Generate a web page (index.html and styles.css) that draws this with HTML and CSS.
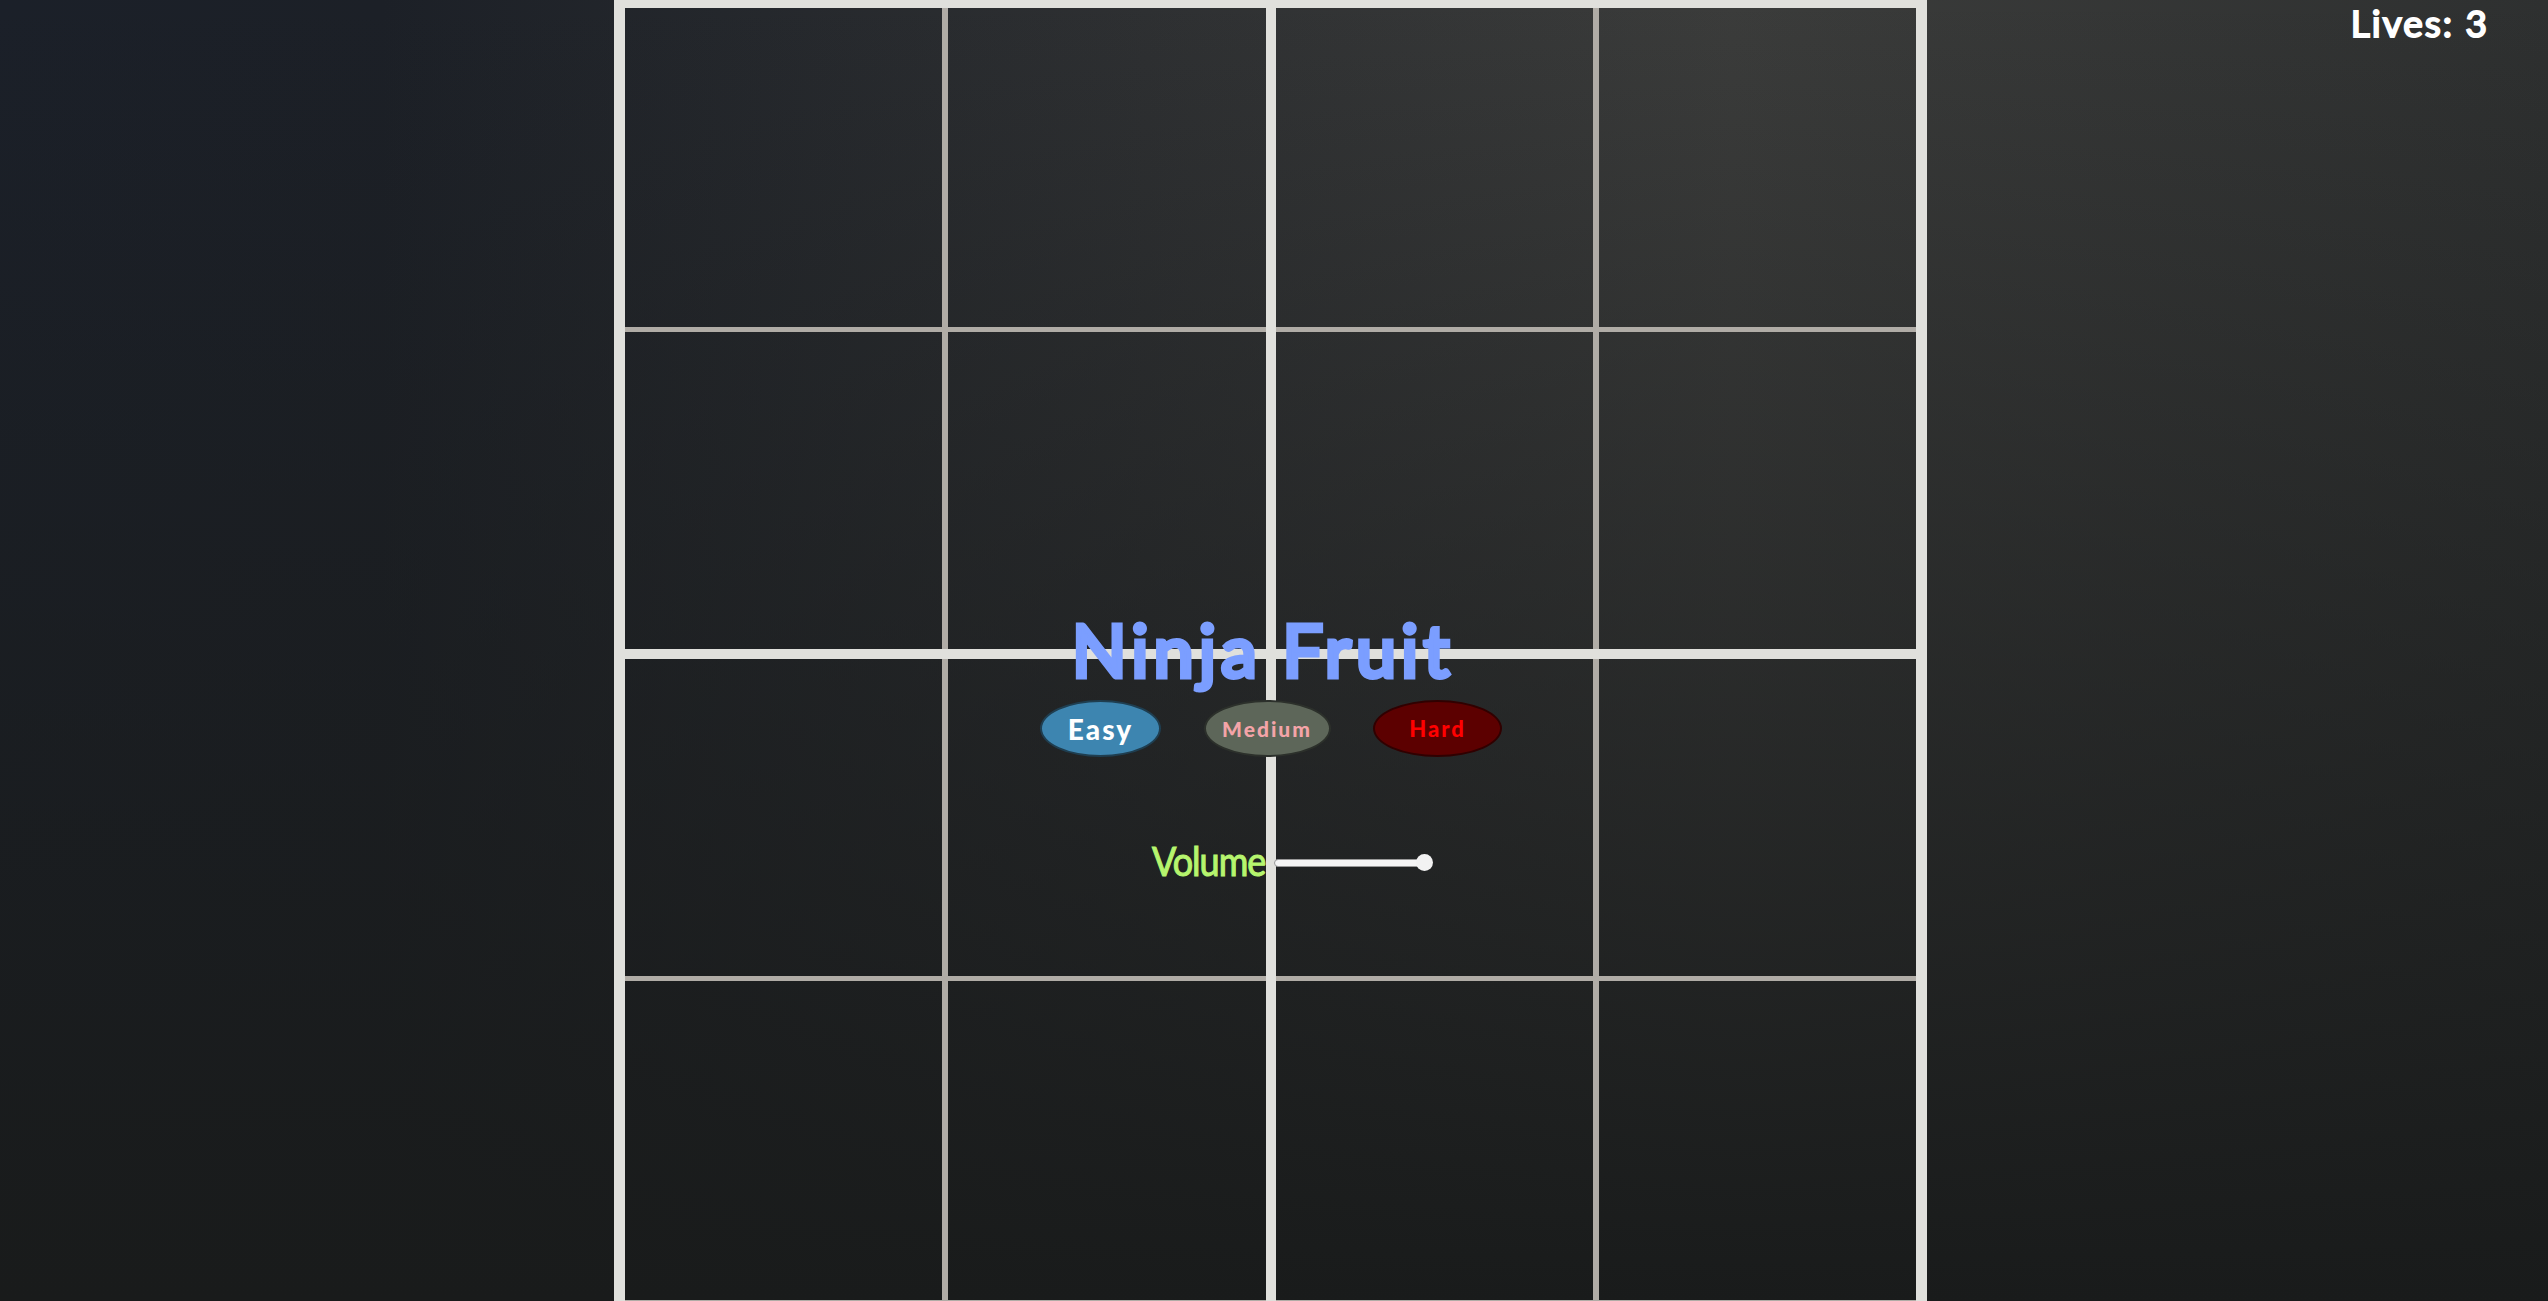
FILE: index.html
```html
<!DOCTYPE html>
<html lang="en">
<head>
    <meta charset="UTF-8">
    <title>Ninja Fruit</title>
    <link rel="stylesheet" href="styles.css">
</head>
<body>

<!-- Play field, 4 x 4 -->
<div class="board">
    <div class="cell"></div><div class="cell"></div><div class="cell"></div><div class="cell"></div>
    <div class="cell"></div><div class="cell"></div><div class="cell"></div><div class="cell"></div>
    <div class="cell"></div><div class="cell"></div><div class="cell"></div><div class="cell"></div>
    <div class="cell"></div><div class="cell"></div><div class="cell"></div><div class="cell"></div>
</div>

<div class="lives">Lives: 3</div>

<!-- Start menu sits over the board -->
<div class="menu">
    <h1>Ninja Fruit</h1>
    <div class="levels">
        <button class="easy">Easy</button>
        <button class="medium">Medium</button>
        <button class="hard">Hard</button>
    </div>
    <div class="volume">
        <label>Volume</label>
        <div class="slider"><div class="thumb"></div></div>
    </div>
</div>

</body>
</html>
```

FILE: styles.css
```css
html, body {
    height: 100%;
}
body {
    margin: 0;
    overflow: hidden;
    font-family: "Lato", sans-serif;
    background-color: #1a1b1b;
    background-image:
        linear-gradient(to bottom, rgba(25, 27, 27, 0) 0%, #191b1b 100%),
        linear-gradient(to right, #1b2029 0%, #1c2027 15%, #2e3032 45%, #3b3c3b 68%, #2e3030 100%);
}
.board {
    display: grid;
    grid-template-columns: 331px 325.5px 325.5px 331px;
    grid-template-rows: 330px 324px 325px 324px;
    width: 1313px;
    margin-left: 614px;
}
/* thick lines are listed first so they lie over the thin ones */
.cell {
    --l: 0px;
    --r: 0px;
    --t: 0px;
    --b: 0px;
    box-shadow:
        inset var(--l) 0 #e0e0dc,
        inset calc(var(--r) * -1) 0 #e0e0dc,
        inset 0 var(--t) #e0e0dc,
        inset 0 calc(var(--b) * -1) #e0e0dc,
        inset 3px 0 #b0aca6,
        inset -3px 0 #b0aca6,
        inset 0 2px #b0aca6,
        inset 0 -3px #b0aca6;
}
.cell:nth-child(4n+1) { --l: 11px; }
.cell:nth-child(4n) { --r: 11px; }
.cell:nth-child(4n+2) { --r: 5px; }
.cell:nth-child(4n+3) { --l: 5px; }
.cell:nth-child(-n+4) { --t: 8px; }
.cell:nth-child(n+5):nth-child(-n+8) { --b: 5px; }
.cell:nth-child(n+9):nth-child(-n+12) { --t: 5px; }

.lives {
    position: absolute;
    top: 0;
    right: 59px;
    color: #fff;
    font-size: 37px;
    letter-spacing: 2px;
    line-height: 45px;
    -webkit-text-stroke: 2px #fff;
}
.menu {
    position: absolute;
    top: 606px;
    left: 1040px;
    width: 462px;
    display: flex;
    flex-direction: column;
    align-items: center;
}
h1 {
    margin: 0 16px 0 0;
    color: #7b9eff;
    font-size: 72px;
    line-height: 86px;
    font-weight: 400;
    letter-spacing: 5px;
    word-spacing: -3px;
    white-space: nowrap;
    -webkit-text-stroke: 5px #7b9eff;
}
.levels {
    display: flex;
    justify-content: space-between;
    width: 100%;
    margin-top: 8px;
}
.levels button {
    height: 57px;
    padding: 0;
    border: 2px solid #15191b;
    border-radius: 50%;
    font-family: "Lato", sans-serif;
    font-weight: 900;
    letter-spacing: 2px;
}
.levels .easy {
    width: 121px;
    background-color: #3d85b0;
    border-color: #1f3e50;
    color: #fff;
    font-size: 28px;
}
.levels .medium {
    width: 127px;
    background-color: #5d6659;
    border-color: #2c302b;
    color: #f4a4a8;
    font-size: 21px;
}
.levels .hard {
    width: 129px;
    background-color: #5c0000;
    border-color: #300000;
    color: #ff0000;
    font-size: 22px;
}
.volume {
    display: flex;
    align-items: center;
    width: 100%;
    margin-top: 83px;
}
.volume label {
    margin-left: 112px;
    color: #b6f56e;
    font-size: 36px;
    letter-spacing: -1px;
    line-height: 46px;
    -webkit-text-stroke: 1px #b6f56e;
    transform: translateY(-3px) scaleY(1.15);
}
.slider {
    position: relative;
    width: 150px;
    height: 6px;
    margin-left: 9px;
    background-color: #f5f5f5;
    border: 1px solid #999;
    border-radius: 4px;
}
.thumb {
    position: absolute;
    top: -6px;
    right: -8px;
    width: 17px;
    height: 17px;
    background-color: #f2f2f2;
    border-radius: 50%;
}
```
